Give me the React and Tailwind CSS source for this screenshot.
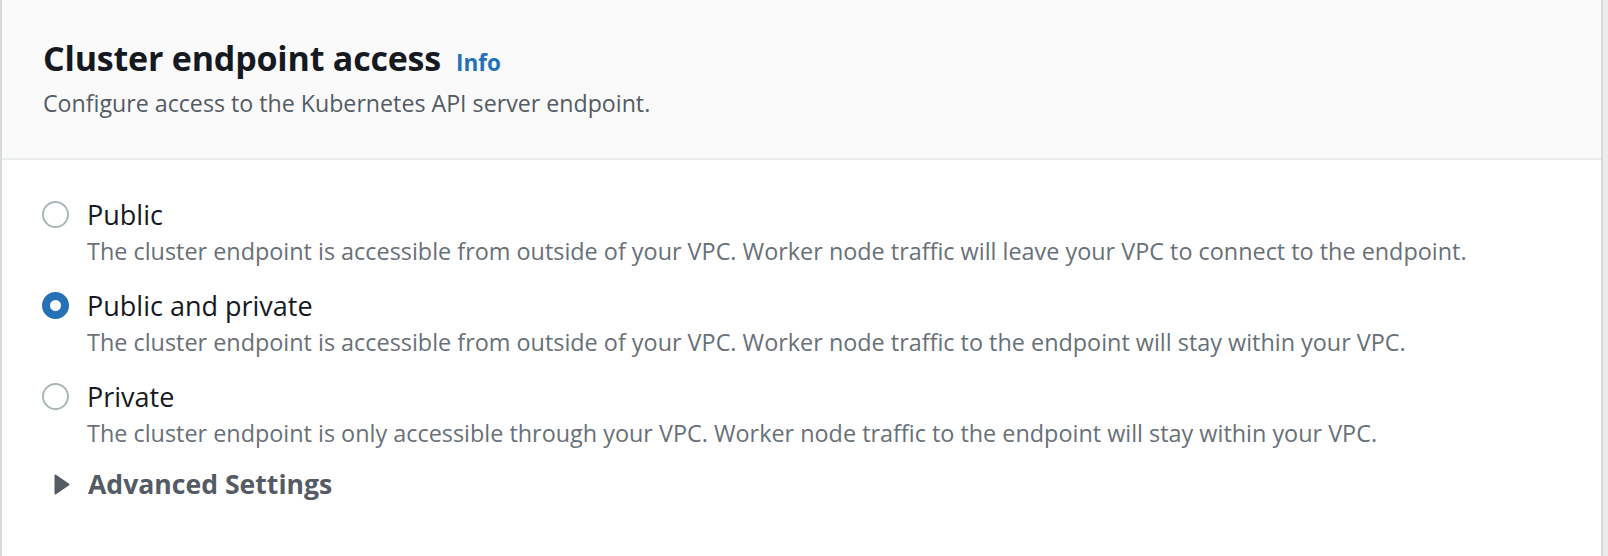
export default function App() {
  const font = { fontFamily: '"Open Sans", "Noto Sans", Arial, sans-serif' };
  const options = [
    {
      label: "Public",
      desc: "The cluster endpoint is accessible from outside of your VPC. Worker node traffic will leave your VPC to connect to the endpoint.",
      checked: false,
    },
    {
      label: "Public and private",
      desc: "The cluster endpoint is accessible from outside of your VPC. Worker node traffic to the endpoint will stay within your VPC.",
      checked: true,
    },
    {
      label: "Private",
      desc: "The cluster endpoint is only accessible through your VPC. Worker node traffic to the endpoint will stay within your VPC.",
      checked: false,
    },
  ];
  return (
    <div className="flex w-[1608px] h-[556px] bg-[#ececec] overflow-hidden" style={font}>
      <div className="w-[1603px] h-full bg-white border-l-2 border-r-2 border-[#d5dbdb] flex flex-col">
        <div className="bg-[#fafafa] border-b-2 border-[#eaeded] h-[160px] pl-[41px] pt-[36px]">
          <div className="flex items-baseline gap-[15px]">
            <h2 className="text-[34px] leading-[44px] font-bold text-[#16191f] tracking-[-0.2px]">Cluster endpoint access</h2>
            <span className="text-[22.5px] font-bold text-[#2571b8]">Info</span>
          </div>
          <p className="mt-[7px] text-[23.2px] leading-[32px] text-[#545b64]">
            Configure access to the Kubernetes API server endpoint.
          </p>
        </div>
        <div className="pl-[40px] pt-[36px] flex flex-col">
          {options.map((o, i) => (
            <div key={i} className="flex gap-[18px] mb-[19px]">
              <div className="pt-[5px]">
                {o.checked ? (
                  <div className="w-[27px] h-[27px] rounded-full border-[8px] border-[#2571b8] bg-white" />
                ) : (
                  <div className="w-[27px] h-[27px] rounded-full border-[2px] border-[#aab7b8] bg-white" />
                )}
              </div>
              <div className="flex flex-col">
                <span className="text-[27px] leading-[38px] text-[#16191f]">{o.label}</span>
                <span className="text-[23.4px] leading-[34px] text-[#687078]">{o.desc}</span>
              </div>
            </div>
          ))}
          <div className="flex items-center gap-[18px] pl-[12px] mt-[-3px]">
            <svg width="16" height="21" viewBox="0 0 16 21">
              <path d="M1.5 1.5 L14.5 10.5 L1.5 19.5 Z" fill="#545b64" stroke="#545b64" strokeWidth="2" strokeLinejoin="round" />
            </svg>
            <span className="text-[26.6px] leading-[36px] font-bold text-[#545b64]">Advanced Settings</span>
          </div>
        </div>
      </div>
    </div>
  );
}
